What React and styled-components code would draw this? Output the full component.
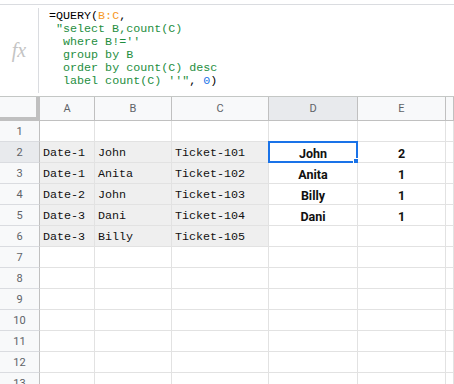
import React from 'react'
import styled, { createGlobalStyle } from 'styled-components'

const GlobalStyle = createGlobalStyle`
  html, body {
    margin: 0;
    padding: 0;
    background: #fff;
    overflow: hidden;
  }
  body {
    font-family: Roboto, "Liberation Sans", sans-serif;
  }
`

const Page = styled.div`
  width: 454px;
  height: 384px;
  padding-top: 4px;
  box-sizing: border-box;
  overflow: hidden;
`

const FormulaBar = styled.div`
  display: flex;
  height: 91px;
  border-top: 1px solid #dadce0;
  border-bottom: 1px solid #c4c7c5;
`

const FxBox = styled.div`
  flex: none;
  width: 39px;
  margin: 3px 0;
  display: flex;
  align-items: center;
  justify-content: center;
  border-right: 1px solid #dadce0;
  font: italic 20px "Liberation Serif", serif;
  color: #c4c4c4;
  box-sizing: border-box;
`

const Formula = styled.pre`
  margin: 0;
  padding: 5px 0 0 10px;
  font: 11.7px/13px "Liberation Mono", monospace;
  color: #000;
`

const Str = styled.span`
  color: #1e8e3e;
`

const Range = styled.span`
  color: #f7981d;
`

const Num = styled.span`
  color: #1a73e8;
`

const Sheet = styled.div`
  display: grid;
  grid-template-columns: 40px 55px 77px 97px 89px 88px 1fr;
  grid-template-rows: 24px;
  grid-auto-rows: 21px;
`

const Corner = styled.div`
  background: #f8f9fa;
  border-right: 4px solid #c0c0c0;
  border-bottom: 4px solid #c0c0c0;
  box-sizing: border-box;
`

const ColHead = styled.div`
  display: flex;
  align-items: center;
  justify-content: center;
  background: ${p => (p.$active ? '#e8eaed' : '#f8f9fa')};
  border-right: 1px solid #c0c0c0;
  border-bottom: 1px solid #c0c0c0;
  box-sizing: border-box;
  font-size: 11px;
  color: #5f6368;
`

const RowHead = styled.div`
  display: flex;
  align-items: center;
  justify-content: center;
  background: ${p => (p.$active ? '#e8eaed' : '#f8f9fa')};
  border-right: 1px solid #c0c0c0;
  border-bottom: 1px solid #dadce0;
  box-sizing: border-box;
  font-size: 11px;
  color: #5f6368;
  padding-top: 1px;
`

const Cell = styled.div`
  position: relative;
  display: flex;
  align-items: center;
  justify-content: ${p => (p.$center ? 'center' : 'flex-start')};
  padding: 2px 3px 0;
  background: ${p => (p.$fill ? '#efefef' : '#fff')};
  border-right: 1px solid #e2e2e2;
  border-bottom: 1px solid #e2e2e2;
  box-sizing: border-box;
  white-space: nowrap;
  overflow: ${p => (p.$selected ? 'visible' : 'hidden')};
  font: ${p =>
    p.$bold
      ? '700 12.5px Roboto, "Liberation Sans", sans-serif'
      : '11.7px "Liberation Mono", monospace'};
  color: #111;
`

const Selection = styled.div`
  position: absolute;
  top: -1px;
  left: -1px;
  right: -1px;
  bottom: -1px;
  border: 2px solid #1a73e8;
  pointer-events: none;
`

const Handle = styled.div`
  position: absolute;
  right: -4px;
  bottom: -4px;
  width: 5px;
  height: 5px;
  background: #1a73e8;
  border: 1px solid #fff;
`

const cols = ['A', 'B', 'C', 'D', 'E', '']

const rows = [
  [],
  ['Date-1', 'John', 'Ticket-101', 'John', '2'],
  ['Date-1', 'Anita', 'Ticket-102', 'Anita', '1'],
  ['Date-2', 'John', 'Ticket-103', 'Billy', '1'],
  ['Date-3', 'Dani', 'Ticket-104', 'Dani', '1'],
  ['Date-3', 'Billy', 'Ticket-105'],
  [], [], [], [], [], [], [],
]

export default function App() {
  return (
    <Page>
      <GlobalStyle />
      <FormulaBar>
        <FxBox>fx</FxBox>
        <Formula>
          =QUERY(<Range>B:C</Range>,{'\n'}
          {' '}<Str>"select B,count(C){'\n'}
          {'  '}where B!=''{'\n'}
          {'  '}group by B{'\n'}
          {'  '}order by count(C) desc{'\n'}
          {'  '}label count(C) ''"</Str>, <Num>0</Num>)
        </Formula>
      </FormulaBar>
      <Sheet>
        <Corner />
        {cols.map((c, i) => (
          <ColHead key={i} $active={c === 'D'}>{c}</ColHead>
        ))}
        {rows.map((r, ri) => (
          <React.Fragment key={ri}>
            <RowHead $active={ri === 1}>{ri + 1}</RowHead>
            {cols.map((c, ci) => {
              const filled = ri >= 1 && ri <= 5 && ci < 3
              const selected = ri === 1 && ci === 3
              return (
                <Cell
                  key={ci}
                  $fill={filled}
                  $center={ci === 3 || ci === 4}
                  $bold={ci === 3 || ci === 4}
                  $selected={selected}
                >
                  {r[ci] || ''}
                  {selected && (
                    <Selection>
                      <Handle />
                    </Selection>
                  )}
                </Cell>
              )
            })}
          </React.Fragment>
        ))}
      </Sheet>
    </Page>
  )
}
